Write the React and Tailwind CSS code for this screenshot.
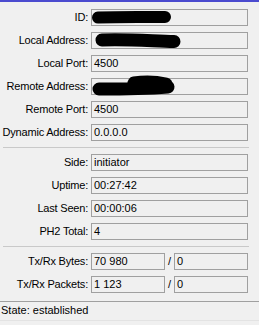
const font = { fontFamily: '"Liberation Sans", Arial, sans-serif' };

const Blot = ({ d, w = 13 }) => (
  <svg className="absolute left-0 top-0 overflow-visible" width="157" height="17" viewBox="0 0 157 17">
    <path d={d} stroke="#000" strokeWidth={w} strokeLinecap="round" strokeLinejoin="round" fill="none" />
  </svg>
);

const Label = ({ children }) => (
  <div className="w-[89px] shrink-0 text-right pr-[1px] whitespace-nowrap tracking-[-0.2px]">{children}:</div>
);

const Field = ({ label, value, blot }) => (
  <div className="flex items-center h-[17px]">
    <Label>{label}</Label>
    <div className="relative ml-[2px] w-[157px] h-[17px] border border-[#a0a0a0] px-[2px] leading-[15px]">
      {value}
      {blot}
    </div>
  </div>
);

const PairField = ({ label, a, b }) => (
  <div className="flex items-center h-[17px]">
    <Label>{label}</Label>
    <div className="ml-[2px] w-[74px] h-[17px] border border-[#a0a0a0] px-[2px] leading-[15px]">{a}</div>
    <div className="w-[9px] text-center">/</div>
    <div className="w-[74px] h-[17px] border border-[#a0a0a0] px-[2px] leading-[15px]">{b}</div>
  </div>
);

const Divider = () => <div className="ml-[3px] mr-[10px] my-[6px] h-px bg-[#c9c9c9]" />;

export default function App() {
  return (
    <div className="w-[259px] h-[325px] bg-[#f0f0f0] text-[11px] text-black flex flex-col overflow-hidden" style={font}>
      <div className="h-[2px] bg-[#4b4bcf]" />
      <div className="pt-[7px] flex flex-col">
        <div className="flex flex-col gap-[6px]">
          <Field label="ID" value="" blot={<Blot d="M6 7.5 C 30 6.5, 55 7, 73 7" w={12} />} />
          <Field label="Local Address" value="" blot={<Blot d="M10 7 C 35 6, 60 8, 82 8.5" w={13} />} />
          <Field label="Local Port" value="4500" />
          <Field label="Remote Address" value="" blot={<Blot d="M7 10 C 30 10, 50 10, 76 8 M 42 4 C 55 2, 65 3, 74 5" w={13} />} />
          <Field label="Remote Port" value="4500" />
          <Field label="Dynamic Address" value="0.0.0.0" />
        </div>
        <Divider />
        <div className="flex flex-col gap-[6px]">
          <Field label="Side" value="initiator" />
          <Field label="Uptime" value="00:27:42" />
          <Field label="Last Seen" value="00:00:06" />
          <Field label="PH2 Total" value="4" />
        </div>
        <Divider />
        <div className="flex flex-col gap-[6px]">
          <PairField label="Tx/Rx Bytes" a="70 980" b="0" />
          <PairField label="Tx/Rx Packets" a="1 123" b="0" />
        </div>
      </div>
      <div className="mt-[8px] border-t border-[#a0a0a0] flex-1 flex flex-col">
        <div className="px-[1px] h-[18px] leading-[16px]">State: established</div>
        <div className="border-t border-[#e3e3e3]" />
      </div>
    </div>
  );
}
